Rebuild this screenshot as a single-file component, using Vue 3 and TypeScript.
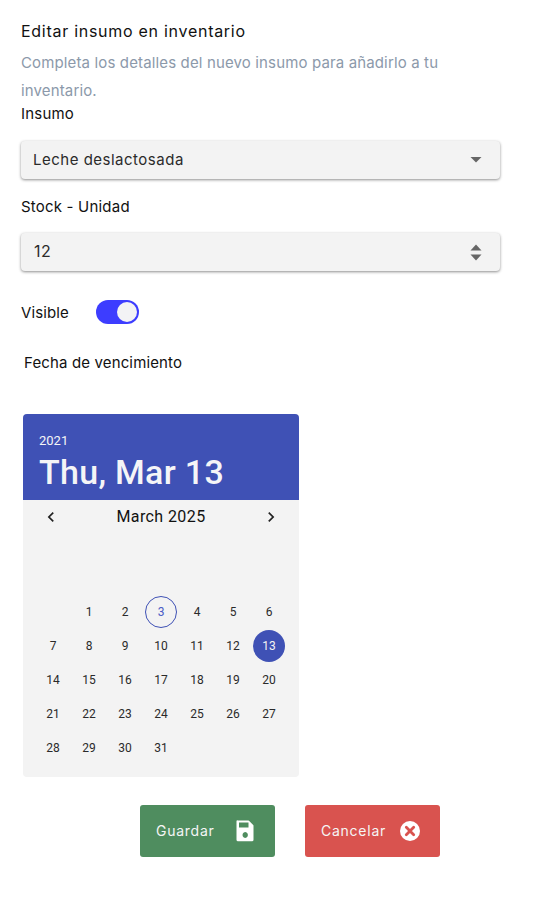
<script setup lang="ts">
const days: number[] = Array.from({ length: 31 }, (_, i) => i + 1)
</script>

<template>
  <main class="page">
    <h1 class="title">Editar insumo en inventario</h1>
    <p class="desc">Completa los detalles del nuevo insumo para añadirlo a tu inventario.</p>

    <label class="label">Insumo</label>
    <div class="field first">
      <span class="value">Leche deslactosada</span>
      <svg class="caret" width="12" height="6" viewBox="0 0 12 6"><path d="M0.5 0h11L6 5.600z" fill="#666" /></svg>
    </div>

    <label class="label stock">Stock - Unidad</label>
    <div class="field second">
      <span class="value num">12</span>
      <svg class="spin" width="12" height="17" viewBox="0 0 12 17">
        <path d="M6 0.500L11.500 6.500H0.500z" fill="#666" />
        <path d="M0.500 10.500h11L6 16.500z" fill="#666" />
      </svg>
    </div>

    <div class="visible">
      <span>Visible</span>
      <span class="switch"><span class="knob"></span></span>
    </div>

    <div class="date-label">Fecha de vencimiento</div>

    <section class="calendar">
      <header class="cal-head">
        <div class="year">2021</div>
        <div class="date">Thu, Mar 13</div>
      </header>
      <div class="month">
        <svg width="20" height="20" viewBox="0 0 24 24"><path d="M15.400 7.400L14 6l-6 6 6 6 1.400-1.400L10.800 12z" fill="#222" /></svg>
        <span class="month-name">March 2025</span>
        <svg width="20" height="20" viewBox="0 0 24 24"><path d="M8.600 16.600L10 18l6-6-6-6-1.400 1.400L13.200 12z" fill="#222" /></svg>
      </div>
      <div class="grid">
        <span class="cell"></span>
        <span v-for="d in days" :key="d" class="cell">
          <span class="day" :class="{ today: d === 3, selected: d === 13 }">{{ d }}</span>
        </span>
      </div>
    </section>

    <div class="actions">
      <button class="btn save" type="button">
        <span class="btn-text">Guardar</span>
        <svg width="24" height="24" viewBox="0 0 24 24">
          <path fill="#fff" fill-rule="evenodd" d="M5 1.500h10.300a1 1 0 0 1 .7.300l4.200 4.200a1 1 0 0 1 .3.700v14a1.500 1.500 0 0 1-1.500 1.500H5a1.500 1.500 0 0 1-1.500-1.500v-19A1.500 1.500 0 0 1 5 1.500zM6 3.500v5h9.500v-5zM12.200 13a2.700 3 0 1 0 .01 0z" />
        </svg>
      </button>
      <button class="btn cancel" type="button">
        <span class="btn-text">Cancelar</span>
        <svg width="24" height="24" viewBox="0 0 24 24">
          <circle cx="12" cy="12" r="10" fill="#fff" />
          <path d="M8.300 8.300l7.400 7.400M15.700 8.300l-7.400 7.400" stroke="#d9534f" stroke-width="2.800" stroke-linecap="round" />
        </svg>
      </button>
    </div>
  </main>
</template>

<style>
body { background: #fff; }
</style>

<style scoped>
.page {
  box-sizing: border-box;
  width: 540px;
  height: 905px;
  padding: 20px 40px 0 21px;
  font-family: Inter, "Liberation Sans", sans-serif;
  color: #111;
  overflow: hidden;
}
.title {
  margin: 0;
  font-family: Inter, sans-serif;
  font-weight: 400;
  font-size: 16px;
  line-height: 22px;
  letter-spacing: 0.72px;
}
.desc {
  margin: 7px 0 0;
  width: 440px;
  font-size: 15px;
  line-height: 28px;
  letter-spacing: 0.14px;
  color: #8c99aa;
}
.label {
  display: block;
  font-size: 15px;
  letter-spacing: 0.2px;
  line-height: 18px;
}
.stock { margin-top: 19px; }
.field {
  box-sizing: border-box;
  width: 479px;
  height: 38px;
  padding: 0 18px 0 12px;
  display: flex;
  align-items: center;
  justify-content: space-between;
  background: #f3f3f3;
  border-radius: 4px;
  box-shadow: 0 1px 3px rgba(0, 0, 0, 0.45);
  font-size: 15px;
  letter-spacing: 0.5px;
  color: #2b2b2b;
}
.first { margin-top: 18px; }
.second { margin-top: 17px; }
.value { padding-bottom: 2px; }
.num { font-size: 16px; padding-left: 1px; }
.visible {
  display: flex;
  align-items: center;
  gap: 27px;
  margin-top: 29px;
  font-size: 15px;
  letter-spacing: 0.1px;
  height: 24px;
}
.switch {
  box-sizing: border-box;
  width: 43px;
  height: 24px;
  padding: 2px;
  border-radius: 12px;
  background: #3d3dff;
  display: flex;
  justify-content: flex-end;
}
.knob {
  width: 20px;
  height: 20px;
  border-radius: 50%;
  background: #f3f3f5;
}
.date-label {
  margin: 30px 0 0 3px;
  font-size: 15px;
  letter-spacing: 0.14px;
  line-height: 18px;
}
.calendar {
  width: 276px;
  margin: 42px 0 0 2px;
  height: 363px;
  background: #f3f3f3;
  border-radius: 4px;
  overflow: hidden;
  font-family: Roboto, sans-serif;
}
.cal-head {
  box-sizing: border-box;
  height: 86px;
  padding: 19px 16px 0;
  background: #3f51b5;
  color: #f5f5f7;
}
.year { font-size: 13px; line-height: 16px; }
.date { font-size: 34px; font-weight: 500; letter-spacing: 0.3px; line-height: 40px; margin-top: 3px; }
.month {
  display: flex;
  align-items: center;
  justify-content: space-between;
  padding: 3px 18px 0;
  height: 28px;
  font-size: 16px;
  letter-spacing: 0.4px;
  color: #111;
}
.month-name { padding-bottom: 1px; }
.grid {
  display: grid;
  grid-template-columns: repeat(7, 36px);
  grid-auto-rows: 34px;
  padding: 64px 12px 0;
}
.cell {
  display: flex;
  align-items: center;
  justify-content: center;
}
.day {
  box-sizing: border-box;
  width: 32px;
  height: 32px;
  display: flex;
  align-items: center;
  justify-content: center;
  border-radius: 50%;
  font-size: 12px;
  color: #2a2a2a;
}
.today {
  border: 1px solid #3f51b5;
  color: #4a5cc5;
}
.selected {
  background: #3f51b5;
  color: #f3f3f3;
}
.actions {
  display: flex;
  gap: 30px;
  margin: 28px 0 0 119px;
}
.btn {
  box-sizing: border-box;
  width: 135px;
  height: 52px;
  display: flex;
  align-items: center;
  justify-content: space-between;
  padding: 0 18px 0 16px;
  border: 0;
  border-radius: 3px;
  color: #f5f5f5;
  font-family: Inter, sans-serif;
  font-size: 14px;
  letter-spacing: 0.75px;
}
.btn-text { padding-bottom: 2px; }
.save { background: #4f8d5f; }
.cancel { background: #d9534f; }
</style>
